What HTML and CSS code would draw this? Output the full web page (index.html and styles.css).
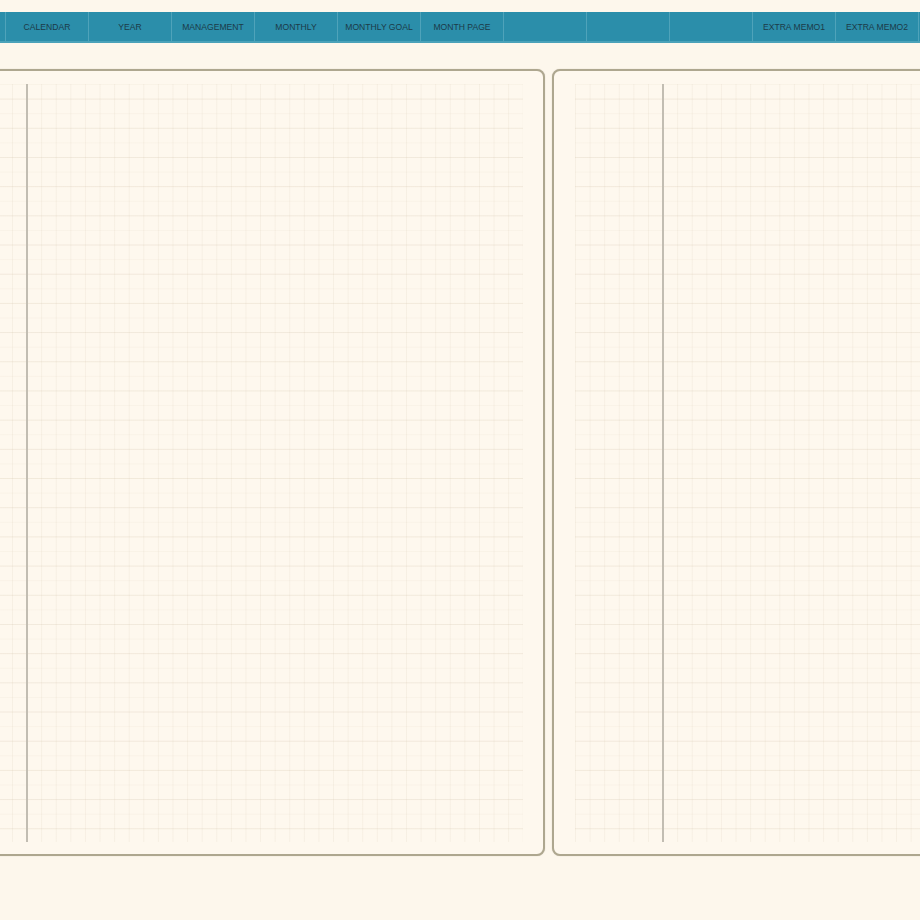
FILE: index.html
```html
<!DOCTYPE html>
<html lang="en">
<head>
  <meta charset="UTF-8" />
  <meta name="viewport" content="width=device-width, initial-scale=1" />
  <title>Planner - Memo</title>
  <link rel="stylesheet" href="styles.css">
</head>
<body>

<nav class="tabs">
  <a class="tab"></a>
  <a class="tab">CALENDAR</a>
  <a class="tab">YEAR</a>
  <a class="tab">MANAGEMENT</a>
  <a class="tab">MONTHLY</a>
  <a class="tab">MONTHLY GOAL</a>
  <a class="tab">MONTH PAGE</a>
  <a class="tab"></a>
  <a class="tab"></a>
  <a class="tab"></a>
  <a class="tab">EXTRA MEMO1</a>
  <a class="tab">EXTRA MEMO2</a>
  <a class="tab"></a>
</nav>

<main class="spread">
  <section class="page">
    <div class="grid">
      <div class="margin-line"></div>
    </div>
  </section>
  <section class="page">
    <div class="grid">
      <div class="margin-line"></div>
    </div>
  </section>
</main>

</body>
</html>
```

FILE: styles.css
```css
* {
  box-sizing: border-box;
}
body {
  margin: 0;
  background: #fdf7ec;
  font-family: "Liberation Sans", Arial, sans-serif;
  overflow: hidden;
  height: 920px;
}
.tabs {
  display: flex;
  margin: 12px 0 0 -77px;
  height: 31px;
  background: #2b8eaa;
  border-bottom: 2px solid #4ba2b9;
}
.tab {
  flex: 0 0 83px;
  display: flex;
  align-items: center;
  justify-content: center;
  border-right: 1px solid #4fa3ba;
  color: #1c3b48;
  font-size: 8.6px;
  white-space: nowrap;
}
.spread {
  display: flex;
  gap: 7px;
  margin: 26px 0 0 -84px;
}
.page {
  flex: 0 0 629px;
  height: 787px;
  border: 2px solid #aea78f;
  border-radius: 8px;
  background: #fef8ee;
  padding: 13px 19px 12px 21px;
  box-shadow: 0 0 1px rgb(120 110 90 / 0.4);
}
.grid {
  position: relative;
  width: 584px;
  height: 758px;
  background-image:
    linear-gradient(to bottom, rgb(190 170 140 / 0.13) 1px, transparent 1px),
    linear-gradient(to bottom, rgb(190 170 140 / 0.07) 1px, transparent 1px),
    linear-gradient(to right, rgb(190 170 140 / 0.11) 1px, transparent 1px);
  background-size: 100% 29.2px, 100% 14.6px, 14.6px 100%;
  background-position: 0 14.6px, 0 0, 0 0;
}
.margin-line {
  position: absolute;
  top: 0;
  bottom: 0;
  left: 87px;
  width: 1.5px;
  background: #c2bdb2;
}
```
